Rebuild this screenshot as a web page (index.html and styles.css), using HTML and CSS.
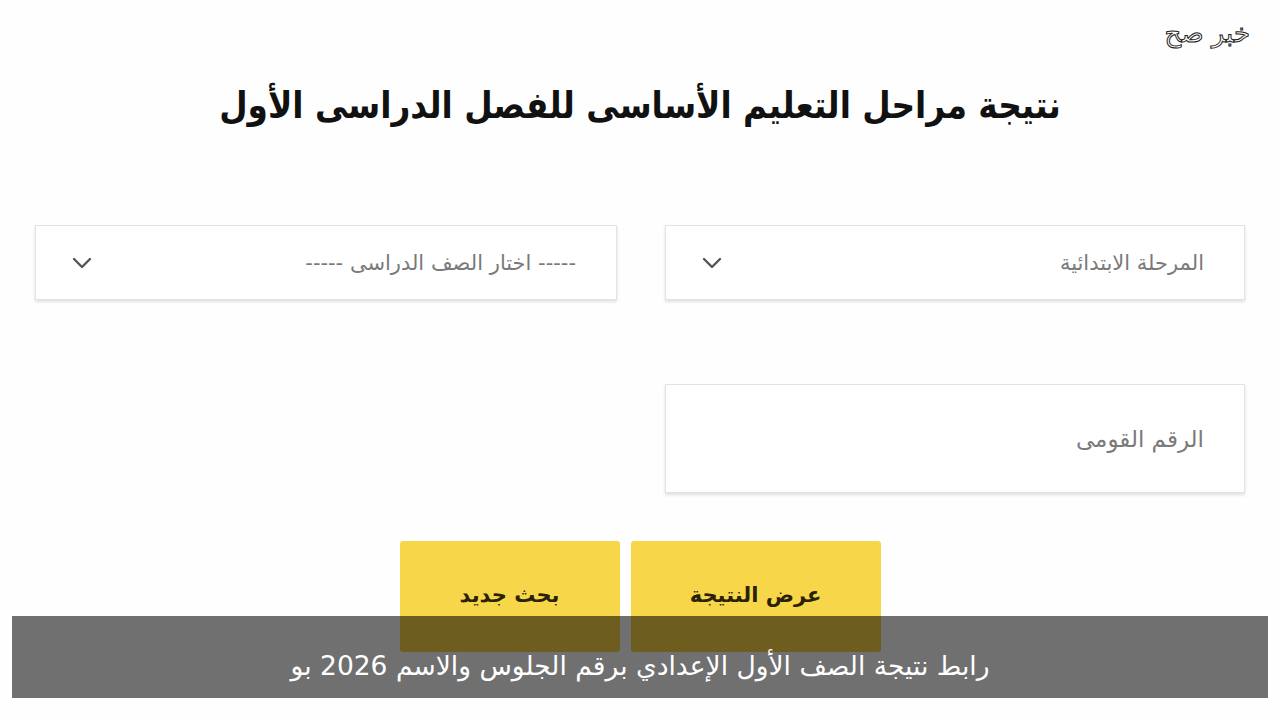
FILE: index.html
```html
<!DOCTYPE html>
<html lang="ar" dir="rtl">
<head>
<meta charset="utf-8">
<link rel="stylesheet" href="styles.css">
</head>
<body>
<div class="page">
  <div class="brand">خبر صح</div>
  <h1 class="title">نتيجة مراحل التعليم الأساسى للفصل الدراسى الأول</h1>
  <div class="form">
    <div class="field select">
      <span class="value">المرحلة الابتدائية</span>
      <svg class="chev" width="20" height="12" viewBox="0 0 20 12"><path d="M2 2 L10 10 L18 2" fill="none" stroke="#555" stroke-width="2.4" stroke-linecap="round" stroke-linejoin="round"/></svg>
    </div>
    <div class="field select">
      <span class="value">----- اختار الصف الدراسى -----</span>
      <svg class="chev" width="20" height="12" viewBox="0 0 20 12"><path d="M2 2 L10 10 L18 2" fill="none" stroke="#555" stroke-width="2.4" stroke-linecap="round" stroke-linejoin="round"/></svg>
    </div>
    <div class="field input">
      <span class="value placeholder">الرقم القومى</span>
    </div>
  </div>
  <div class="actions">
    <div class="btn">عرض النتيجة</div>
    <div class="btn btn-small">بحث جديد</div>
  </div>
  <div class="caption">رابط نتيجة الصف الأول الإعدادي برقم الجلوس والاسم 2026 بو</div>
</div>
</body>
</html>
```
FILE: styles.css
```css
* { box-sizing: border-box; }
html, body { margin: 0; padding: 0; background: #fff; }
body { font-family: "DejaVu Sans", sans-serif; }
.page {
  position: relative;
  width: 1280px;
  height: 720px;
  overflow: hidden;
  background: #fefefe;
  padding-top: 78px;
}
.brand {
  position: absolute;
  top: 18px;
  right: 30px;
  font-size: 26px;
  color: #fff;
  -webkit-text-stroke: 1px #222;
  font-weight: 400;
}
.title {
  margin: 0;
  text-align: center;
  font-size: 37px;
  font-weight: 700;
  color: #111;
  line-height: 56px;
  transform: scaleX(0.885);
}
.form {
  display: grid;
  grid-template-columns: 580px 582px;
  column-gap: 48px;
  row-gap: 84px;
  margin: 91px 35px 0 0;
}
.field {
  background: #fff;
  border: 1px solid #e2e2e2;
  box-shadow: 0 2px 3px rgba(0,0,0,0.12);
  display: flex;
  align-items: center;
  justify-content: space-between;
  padding: 0 40px 0 36px;
  color: #7a7a7a;
  font-size: 21px;
}
.placeholder { font-size: 23px; }
.select { height: 75px; }
.input { height: 109px; }
.chev { display: block; }
.actions {
  display: flex;
  justify-content: center;
  gap: 11px;
  margin-top: 48px;
}
.btn {
  width: 250px;
  height: 111px;
  background: #f8d64a;
  border-radius: 3px;
  display: flex;
  justify-content: center;
  padding-top: 42px;
  font-size: 21px;
  font-weight: 700;
  color: #2a2206;
}
.btn-small { width: 220px; }
.caption {
  position: absolute;
  left: 12px;
  top: 616px;
  width: 1256px;
  height: 82px;
  background: rgba(0,0,0,0.56);
  color: #fff;
  font-size: 26.5px;
  text-align: center;
  padding-top: 33px;
  line-height: 34px;
}
```
